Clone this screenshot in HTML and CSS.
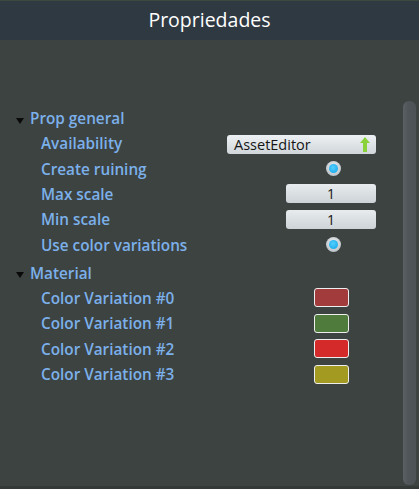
FILE: index.html
```html
<!DOCTYPE html>
<html>
<head>
<meta charset="utf-8">
<link rel="stylesheet" href="styles.css">
</head>
<body>
<div class="panel">
  <div class="header">Propriedades</div>
  <div class="main">
    <div class="content">
      <div class="section">
        <div class="group-row"><span class="caret"></span><span class="group-label">Prop general</span></div>
        <div class="row">
          <span class="label">Availability</span>
          <span class="ctrl ctrl-end">
            <span class="dropdown"><span class="dd-text">AssetEditor</span>
              <svg class="dd-arrow" width="10" height="15" viewBox="0 0 10 15"><path d="M5 0 L10 6 L7 6 L7 15 L3 15 L3 6 L0 6 Z" fill="#8ad23a"/></svg>
            </span>
          </span>
        </div>
        <div class="row">
          <span class="label">Create ruining</span>
          <span class="ctrl"><span class="radio"><span class="dot"></span></span></span>
        </div>
        <div class="row">
          <span class="label">Max scale</span>
          <span class="ctrl"><span class="num">1</span></span>
        </div>
        <div class="row">
          <span class="label">Min scale</span>
          <span class="ctrl"><span class="num">1</span></span>
        </div>
        <div class="row">
          <span class="label">Use color variations</span>
          <span class="ctrl"><span class="radio"><span class="dot"></span></span></span>
        </div>
      </div>
      <div class="section section-2">
        <div class="group-row"><span class="caret"></span><span class="group-label">Material</span></div>
        <div class="row">
          <span class="label">Color Variation #0</span>
          <span class="ctrl"><span class="swatch sw0"></span></span>
        </div>
        <div class="row">
          <span class="label">Color Variation #1</span>
          <span class="ctrl"><span class="swatch sw1"></span></span>
        </div>
        <div class="row">
          <span class="label">Color Variation #2</span>
          <span class="ctrl"><span class="swatch sw2"></span></span>
        </div>
        <div class="row">
          <span class="label">Color Variation #3</span>
          <span class="ctrl"><span class="swatch sw3"></span></span>
        </div>
      </div>
    </div>
    <div class="scroll-col"><div class="scrollbar"></div></div>
  </div>
</div>
</body>
</html>
```
FILE: styles.css
```css
* { box-sizing: border-box; }
html, body { margin: 0; padding: 0; }
body {
  width: 419px;
  height: 489px;
  background: #3c4341;
  font-family: "Open Sans", "DejaVu Sans", sans-serif;
  overflow: hidden;
}
.panel {
  width: 419px;
  height: 489px;
  display: flex;
  flex-direction: column;
  background: #3c4341;
  border-bottom: 3px solid #343a38;
}
.header {
  height: 40px;
  flex-shrink: 0;
  background: #2f3942;
  border-top: 1px solid #3b4a3e;
  color: #ffffff;
  font-size: 19.5px;
  display: flex;
  align-items: center;
  justify-content: center;
  padding-bottom: 2px;
}
.main {
  flex: 1;
  display: flex;
  min-height: 0;
}
.content {
  flex: 1;
  padding-top: 65.5px;
}
.section { display: flex; flex-direction: column; }
.section-2 { margin-top: 2.8px; }
.group-row {
  height: 25px;
  display: flex;
  align-items: center;
  padding-left: 16px;
}
.caret {
  width: 0; height: 0;
  border-left: 4.5px solid transparent;
  border-right: 4.5px solid transparent;
  border-top: 6.5px solid #0a0a0a;
  margin-top: 5px;
  margin-right: 6px;
}
.group-label, .label {
  color: #7cb0ea;
  font-size: 15.3px;
  font-weight: 600;
  white-space: nowrap;
}
.row {
  height: 25.4px;
  display: flex;
  align-items: center;
  padding-left: 41px;
}
.label { flex: 1; }
.ctrl {
  width: 90px;
  display: flex;
  justify-content: center;
  align-items: center;
  flex-shrink: 0;
}
.ctrl-end { justify-content: flex-end; }
.dropdown {
  flex-shrink: 0;
  width: 149px;
  height: 19px;
  margin-top: 3px;
  border-radius: 3px;
  background: linear-gradient(#eef1f3, #d0d6da);
  display: flex;
  align-items: center;
  justify-content: space-between;
  padding: 0 6px 0 7px;
}
.dd-text {
  color: #151515;
  font-size: 14.5px;
  line-height: 19px;
}
.dd-arrow { display: block; }
.radio {
  width: 15px;
  height: 15px;
  border-radius: 50%;
  background: radial-gradient(circle at 50% 40%, #f2f4f6, #a9b0b6);
  display: flex;
  align-items: center;
  justify-content: center;
  margin-left: 4px;
}
.dot {
  width: 9px;
  height: 9px;
  border-radius: 50%;
  background: radial-gradient(circle at 45% 40%, #52d0ff, #0f9fe6);
}
.num {
  width: 90px;
  height: 19px;
  border-radius: 3px;
  background: linear-gradient(#e8ecee, #cdd3d7);
  color: #151515;
  font-size: 14px;
  line-height: 19px;
  text-align: center;
}
.swatch {
  width: 35px;
  height: 19px;
  border: 1.5px solid #eeeeee;
  border-radius: 3px;
}
.sw0 { background: #a23b3c; }
.sw1 { background: #4f7b3c; }
.sw2 { background: #d42a2a; }
.sw3 { background: #a39b21; }
.scroll-col {
  width: 43px;
  flex-shrink: 0;
  display: flex;
  justify-content: flex-end;
  padding: 61px 3px 1px 0;
}
.scrollbar {
  width: 13px;
  height: 100%;
  border-radius: 6px;
  background: linear-gradient(90deg, #5a6063, #4f5558 40%, #4c5255);
}
```
